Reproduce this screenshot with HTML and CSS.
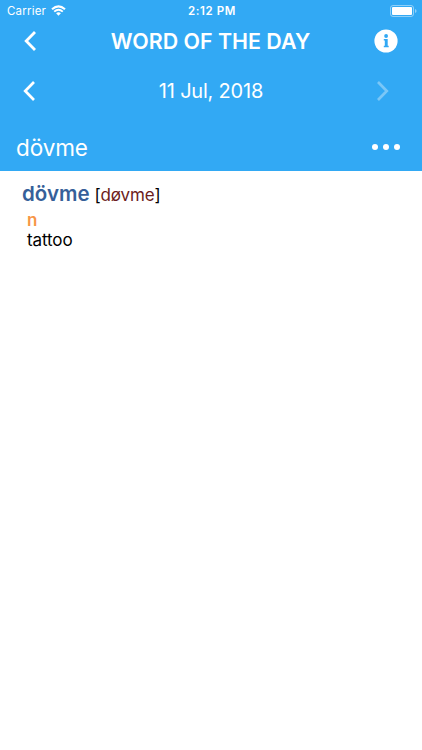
FILE: index.html
```
<!DOCTYPE html>
<html lang="en">
<head>
  <meta charset="UTF-8">
  <meta name="viewport" content="width=device-width, initial-scale=1.0">
  <title>Word of the Day</title>
  <link rel="stylesheet" href="styles.css">
</head>
<body>
  <header class="header">
    <div class="status-bar">
      <div class="carrier">
        <span class="carrier-name">Carrier</span>
        <svg class="wifi" width="15" height="11" viewBox="0 0 15 11">
          <path d="M1 4.2 Q7.5 -1.6 14 4.2" fill="none" stroke="#fff" stroke-width="2.1"/>
          <path d="M3.2 6.6 Q7.5 2.8 11.8 6.6" fill="none" stroke="#fff" stroke-width="1.9"/>
          <path d="M5.1 8.3 Q7.5 6.2 9.9 8.3 L7.5 10.7 Z" fill="#fff"/>
        </svg>
      </div>
      <span class="time">2:12 PM</span>
      <svg class="battery" width="27" height="12" viewBox="0 0 27 12">
        <rect x="0.5" y="0.5" width="23" height="11" rx="2.5" fill="none" stroke="#fff" stroke-opacity="0.45"/>
        <rect x="2" y="2" width="20" height="8" rx="1" fill="#fff"/>
        <path d="M25 4 Q26.6 4.5 26.6 6 Q26.6 7.5 25 8 Z" fill="#fff" fill-opacity="0.45"/>
      </svg>
    </div>

    <div class="nav-bar">
      <svg class="icon" width="14" height="22" viewBox="0 0 14 22">
        <path d="M12 2 L3.2 11 L12 20" fill="none" stroke="#fff" stroke-width="2.8"/>
      </svg>
      <h1 class="title">WORD OF THE DAY</h1>
      <svg class="info" width="24" height="24" viewBox="0 0 24 24">
        <circle cx="12" cy="12" r="11.6" fill="#fff"/>
        <circle cx="12.1" cy="7" r="1.9" fill="#32a9f4"/>
        <path d="M9.8 10 H13.7 V16.8 H14.7 V18.3 H9.8 V16.8 H10.8 V11.5 H9.8 Z" fill="#32a9f4"/>
      </svg>
    </div>

    <div class="date-bar">
      <svg class="icon" width="14" height="22" viewBox="0 0 14 22">
        <path d="M12 2 L3.2 11 L12 20" fill="none" stroke="#fff" stroke-width="2.7"/>
      </svg>
      <span class="date">11 Jul, 2018</span>
      <svg class="icon disabled" width="14" height="22" viewBox="0 0 14 22">
        <path d="M2 2 L10.8 11 L2 20" fill="none" stroke="#fff" stroke-width="2.7"/>
      </svg>
    </div>

    <div class="word-bar">
      <span class="word">dövme</span>
      <div class="more">
        <span class="dot"></span>
        <span class="dot"></span>
        <span class="dot"></span>
      </div>
    </div>
  </header>

  <main class="entry">
    <div class="entry-head">
      <strong class="entry-word">dövme</strong>
      <span class="phonetic">[<span class="sound">døvme</span>]</span>
    </div>
    <div class="part">n</div>
    <div class="meaning">tattoo</div>
  </main>
</body>
</html>
```

FILE: styles.css
```
* {
  box-sizing: border-box;
}
body {
  margin: 0;
  background: #ffffff;
  font-family: Inter, "Liberation Sans", sans-serif;
  color: #000;
}
.header {
  height: 171px;
  background: #32a9f4;
  color: #fff;
}
.status-bar {
  display: grid;
  grid-template-columns: 1fr auto 1fr;
  align-items: center;
  height: 21px;
  padding: 0 5px 0 7px;
}
.carrier {
  display: flex;
  align-items: center;
  gap: 5px;
}
.carrier-name {
  font-size: 11.5px;
  letter-spacing: 0.2px;
}
.time {
  font-size: 11.5px;
  font-weight: 600;
  letter-spacing: 0.6px;
}
.battery {
  justify-self: end;
}
.nav-bar,
.date-bar {
  display: grid;
  grid-template-columns: 1fr auto 1fr;
  align-items: center;
}
.nav-bar {
  height: 40px;
  padding: 0 24px 0 23px;
}
.title {
  margin: 0;
  font-size: 21.4px;
  font-weight: 600;
  line-height: 24px;
  padding-bottom: 1px;
}
.info,
.disabled {
  justify-self: end;
}
.date-bar {
  height: 60px;
  padding: 0 32px 0 22px;
}
.date {
  font-size: 20px;
  letter-spacing: -0.2px;
  /* optical centre, the side icons have different insets */
  margin-left: 10px;
}
.disabled {
  opacity: 0.35;
}
.word-bar {
  display: flex;
  align-items: center;
  justify-content: space-between;
  height: 50px;
  padding: 2px 22px 0 16px;
}
.word {
  font-size: 22.5px;
  letter-spacing: -0.1px;
}
.more {
  display: flex;
  gap: 5px;
}
.dot {
  width: 6px;
  height: 6px;
  border-radius: 50%;
  background: #fff;
}
.entry {
  padding: 7px 22px;
}
.entry-head {
  display: flex;
  align-items: baseline;
  gap: 6px;
  height: 31px;
  line-height: 31px;
}
.entry-word {
  font-size: 20.5px;
  font-weight: 600;
  color: #365f99;
}
.phonetic {
  margin-left: -1px;
  font-size: 17px;
  letter-spacing: -0.1px;
}
.sound {
  color: #6b1c20;
}
.part {
  padding: 1px 0 0 5px;
  font-size: 17px;
  font-weight: 600;
  line-height: 21px;
  color: #f79646;
}
.meaning {
  padding-left: 5px;
  font-size: 17px;
  letter-spacing: -0.1px;
  line-height: 19px;
}
```
